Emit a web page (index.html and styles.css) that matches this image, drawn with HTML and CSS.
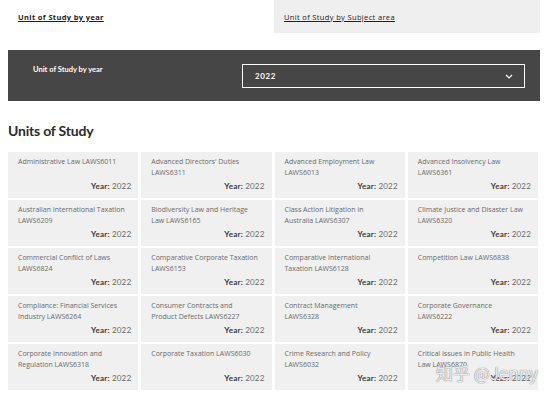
FILE: index.html
```html
<!DOCTYPE html>
<html lang="en">
  <head>
    <meta charset="UTF-8" />
    <meta name="viewport" content="width=device-width, initial-scale=1.0" />
    <title>Units of Study</title>
    <link rel="stylesheet" href="styles.css">
  </head>
  <body>
    <div class="page">
      <div class="tabs">
        <div class="tab tab-active"><a href="#">Unit of Study by year</a></div>
        <div class="tab tab-other"><a href="#">Unit of Study by Subject area</a></div>
      </div>

      <div class="filter-bar">
        <div class="filter-label">Unit of Study by year</div>
        <div class="select-box">
          <span class="select-value">2022</span>
          <svg class="chevron" width="8" height="5" viewBox="0 0 8 5">
            <path d="M1 1 L4 4 L7 1" fill="none" stroke="#fff" stroke-width="1.2" />
          </svg>
        </div>
      </div>

      <h1>Units of Study</h1>

      <div class="unit-grid">
        <div class="unit-card"><p>Administrative Law LAWS6011</p><div class="year"><b>Year:</b> 2022</div></div>
        <div class="unit-card"><p>Advanced Directors' Duties LAWS6311</p><div class="year"><b>Year:</b> 2022</div></div>
        <div class="unit-card"><p>Advanced Employment Law LAWS6013</p><div class="year"><b>Year:</b> 2022</div></div>
        <div class="unit-card"><p>Advanced Insolvency Law LAWS6361</p><div class="year"><b>Year:</b> 2022</div></div>

        <div class="unit-card"><p>Australian International Taxation LAWS6209</p><div class="year"><b>Year:</b> 2022</div></div>
        <div class="unit-card"><p>Biodiversity Law and Heritage Law LAWS6165</p><div class="year"><b>Year:</b> 2022</div></div>
        <div class="unit-card"><p>Class Action Litigation in Australia LAWS6307</p><div class="year"><b>Year:</b> 2022</div></div>
        <div class="unit-card"><p>Climate Justice and Disaster Law LAWS6320</p><div class="year"><b>Year:</b> 2022</div></div>

        <div class="unit-card"><p>Commercial Conflict of Laws LAWS6824</p><div class="year"><b>Year:</b> 2022</div></div>
        <div class="unit-card"><p>Comparative Corporate Taxation LAWS6153</p><div class="year"><b>Year:</b> 2022</div></div>
        <div class="unit-card"><p>Comparative International Taxation LAWS6128</p><div class="year"><b>Year:</b> 2022</div></div>
        <div class="unit-card"><p>Competition Law LAWS6838</p><div class="year"><b>Year:</b> 2022</div></div>

        <div class="unit-card"><p>Compliance: Financial Services Industry LAWS6264</p><div class="year"><b>Year:</b> 2022</div></div>
        <div class="unit-card"><p>Consumer Contracts and Product Defects LAWS6227</p><div class="year"><b>Year:</b> 2022</div></div>
        <div class="unit-card"><p>Contract Management LAWS6328</p><div class="year"><b>Year:</b> 2022</div></div>
        <div class="unit-card"><p>Corporate Governance LAWS6222</p><div class="year"><b>Year:</b> 2022</div></div>

        <div class="unit-card"><p>Corporate Innovation and Regulation LAWS6318</p><div class="year"><b>Year:</b> 2022</div></div>
        <div class="unit-card"><p>Corporate Taxation LAWS6030</p><div class="year"><b>Year:</b> 2022</div></div>
        <div class="unit-card"><p>Crime Research and Policy LAWS6032</p><div class="year"><b>Year:</b> 2022</div></div>
        <div class="unit-card"><p>Critical Issues in Public Health Law LAWS6870</p><div class="year"><b>Year:</b> 2022</div></div>
      </div>
    </div>

    <div class="watermark">知乎 @Jenny</div>
  </body>
</html>
```

FILE: styles.css
```css
body {
  margin: 0;
  background-color: #fff;
  font-family: Lato, "Open Sans", Arial, sans-serif;
  color: #333;
}

.page {
  width: 532px;
  margin-left: 8px;
}

/* tabs on top */
.tabs {
  display: grid;
  grid-template-columns: 266px 266px;
  height: 33px;
}

.tab {
  display: flex;
  align-items: center;
  padding-left: 10px;
  font-family: "Open Sans", Arial, sans-serif;
  font-size: 7.5px;
  letter-spacing: 0.35px;
}

.tab a {
  color: #222;
}

.tab-active a {
  font-weight: bold;
}

.tab-other {
  background-color: #efefef;
}

/* dark filter bar */
.filter-bar {
  display: grid;
  grid-template-columns: 1fr 283px;
  height: 51px;
  margin-top: 17px;
  padding: 14px 15px 0 25px;
  box-sizing: border-box;
  background-color: #464646;
  color: #fff;
}

.filter-label {
  font-size: 7.5px;
  font-weight: bold;
  line-height: 11px;
}

.select-box {
  display: flex;
  align-items: center;
  justify-content: space-between;
  height: 24px;
  padding: 0 11px 0 12px;
  box-sizing: border-box;
  border: 1px solid #fff;
}

.select-value {
  font-size: 8px;
  font-weight: bold;
  letter-spacing: 0.6px;
}

h1 {
  margin: 21px 0 12px;
  font-size: 14px;
  line-height: 18px;
  letter-spacing: -0.2px;
  color: #2b2b2b;
}

/* unit cards */
.unit-grid {
  display: grid;
  grid-template-columns: repeat(4, 1fr);
  grid-auto-rows: 46px;
  gap: 2px 3px;
  width: 530px;
}

.unit-card {
  display: flex;
  flex-direction: column;
  justify-content: space-between;
  padding: 4px 12px 7px 10px;
  background-color: #f0f0f0;
  font-family: "Open Sans", Arial, sans-serif;
  font-size: 7px;
  line-height: 11px;
  color: #6a6a6a;
}

.unit-card p {
  margin: 0;
}

.year {
  margin-right: -5px;
  text-align: right;
  font-family: Lato, Arial, sans-serif;
  font-size: 8px;
  letter-spacing: 0.2px;
  line-height: 10px;
}

.year b {
  color: #3a3a3a;
}

.watermark {
  position: absolute;
  left: 436px;
  top: 360px;
  font-family: "Noto Sans CJK SC", sans-serif;
  font-size: 17px;
  color: rgba(255, 255, 255, 0.85);
  text-shadow: 0 0 1px #888, 0 0 1px #888;
}
```
